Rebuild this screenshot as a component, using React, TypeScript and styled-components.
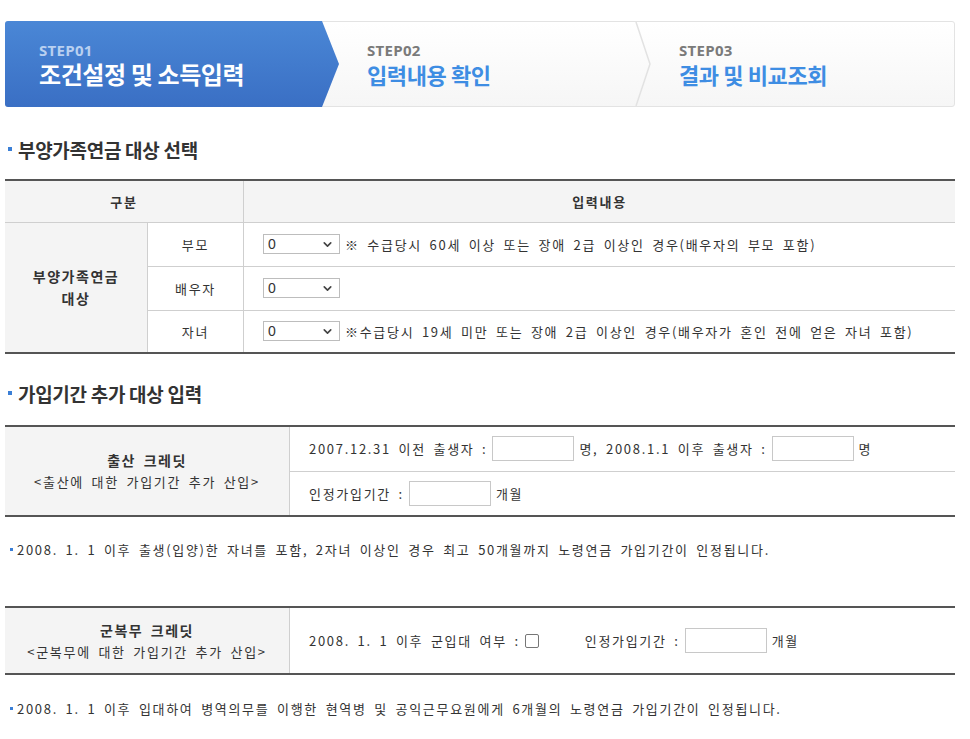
import React from 'react';
import styled, { createGlobalStyle } from 'styled-components';
import { ChevronDown } from 'lucide-react';

// === Global ===
const GlobalStyle = createGlobalStyle`
  body {
    margin: 0;
    background: #fff;
    color: #333;
    font-family: 'Noto Sans CJK KR', 'Noto Sans', sans-serif;
    font-size: 13px;
  }
`;

const Page = styled.div`
  width: 950px;
  padding: 21px 0 0 5px;
`;

// === Step bar ===
const StepBar = styled.div`
  display: flex;
  height: 86px;
  border: 1px solid #e3e3e3;
  border-radius: 3px;
  box-sizing: border-box;
  background: linear-gradient(to bottom, #ffffff, #f6f6f6);
`;

const Step = styled.div<{ $active?: boolean; $width?: number }>`
  position: relative;
  box-sizing: border-box;
  flex: ${p => (p.$width ? `0 0 ${p.$width}px` : '1')};
  display: flex;
  flex-direction: column;
  justify-content: center;
  gap: 2px;
  padding: 0 0 0 ${p => (p.$active ? 34 : 28)}px;
  margin: ${p => (p.$active ? '-1px 0 -1px -1px' : '0')};
  background: ${p => (p.$active ? 'linear-gradient(to bottom, #4a87d6, #3a6fc4)' : 'transparent')};
  clip-path: ${p =>
    p.$active
      ? 'polygon(0 0, calc(100% - 17px) 0, 100% 50%, calc(100% - 17px) 100%, 0 100%)'
      : 'none'};
  border-radius: ${p => (p.$active ? '3px 0 0 3px' : '0')};
`;

const StepLabel = styled.div<{ $active?: boolean }>`
  font-family: 'Open Sans', 'Liberation Sans', sans-serif;
  font-weight: 700;
  font-size: 15px;
  line-height: 18px;
  letter-spacing: 0.3px;
  color: ${p => (p.$active ? '#b9d0f0' : '#7a7a7a')};
`;

const StepTitle = styled.div<{ $active?: boolean }>`
  font-weight: 700;
  font-size: ${p => (p.$active ? 24 : 22)}px;
  line-height: 26px;
  letter-spacing: -0.4px;
  color: ${p => (p.$active ? '#ffffff' : '#3e8de3')};
`;

const StepDivider = styled.svg`
  position: absolute;
  right: 0;
  top: 0;
  width: 16px;
  height: 100%;
`;

// === Headings and notes ===
const SectionTitle = styled.h2<{ $top: number }>`
  display: flex;
  align-items: center;
  gap: 6px;
  margin: ${p => p.$top}px 0 0 3px;
  height: 24px;
  font-size: 19px;
  font-weight: 700;
  color: #333;
  letter-spacing: -0.3px;

  &::before {
    content: '';
    width: 4px;
    height: 4px;
    background: #3b7fd6;
  }
`;

const Note = styled.p<{ $top: number }>`
  display: flex;
  align-items: center;
  gap: 4px;
  margin: ${p => p.$top}px 0 0 5px;
  height: 20px;
  font-size: 13px;
  color: #333;
  letter-spacing: 1.7px;
  word-spacing: 3px;

  &::before {
    content: '';
    width: 3px;
    height: 3px;
    background: #3b7fd6;
  }
`;

// === Tables ===
const Table = styled.table<{ $top: number }>`
  width: 100%;
  margin-top: ${p => p.$top}px;
  border-collapse: collapse;
  border-top: 2px solid #555;
  border-bottom: 2px solid #555;
  font-size: 13px;
  color: #333;
  letter-spacing: 1.7px;
  word-spacing: 3px;
`;

const Row = styled.tr<{ $h: number }>`
  height: ${p => p.$h}px;
`;

const HeadCell = styled.th<{ $width?: number }>`
  width: ${p => (p.$width ? `${p.$width}px` : 'auto')};
  background: #f4f4f4;
  font-weight: 700;
  text-align: center;
  border: 1px solid #cfcfcf;
  border-left: none;
  padding: 0;

  &:last-child {
    border-right: none;
  }
`;

const LabelCell = styled.td<{ $width?: number }>`
  width: ${p => (p.$width ? `${p.$width}px` : 'auto')};
  text-align: center;
  border: 1px solid #cfcfcf;
  padding: 0;
`;

const SideCell = styled.td<{ $width: number }>`
  width: ${p => p.$width}px;
  background: #f4f4f4;
  text-align: center;
  border: 1px solid #cfcfcf;
  border-left: none;
  padding: 0;
  line-height: 22px;
`;

const Strong = styled.strong`
  display: block;
  font-size: 14px;
  font-weight: 700;
  letter-spacing: 1.5px;
`;

const InputCell = styled.td<{ $pad?: number }>`
  border: 1px solid #cfcfcf;
  border-right: none;
  padding: 0 0 0 ${p => p.$pad ?? 19}px;
  white-space: nowrap;
`;

const Inline = styled.div`
  display: flex;
  align-items: center;
  gap: 5px;
`;

const SelectWrap = styled.div`
  position: relative;
  display: inline-flex;
  width: 77px;
  height: 20px;

  svg {
    position: absolute;
    right: 6px;
    top: 4px;
    pointer-events: none;
  }
`;

const Select = styled.select`
  appearance: none;
  width: 100%;
  height: 100%;
  border: 1px solid #bdbdbd;
  background: #fff;
  padding: 0 4px;
  font-family: 'Liberation Sans', sans-serif;
  font-size: 14px;
  color: #333;
`;

const TextBox = styled.input`
  box-sizing: border-box;
  width: 82px;
  height: 25px;
  border: 1px solid #c8c8c8;
  background: #fff;
`;

const Check = styled.input`
  box-sizing: border-box;
  appearance: none;
  width: 14px;
  height: 14px;
  margin: 0;
  border: 1px solid #767676;
  border-radius: 2px;
  background: #fff;
`;

const Spacer = styled.span<{ $w: number }>`
  display: inline-block;
  width: ${p => p.$w}px;
`;

const Sel: React.FC = () => (
  <SelectWrap>
    <Select defaultValue="0">
      <option value="0">0</option>
      <option value="1">1</option>
      <option value="2">2</option>
    </Select>
    <ChevronDown size={13} strokeWidth={3} color="#444" />
  </SelectWrap>
);

export default function App() {
  return (
    <Page>
      <GlobalStyle />

      <StepBar>
        <Step $active $width={334}>
          <StepLabel $active>STEP01</StepLabel>
          <StepTitle $active>조건설정 및 소득입력</StepTitle>
        </Step>
        <Step $width={312}>
          <StepLabel>STEP02</StepLabel>
          <StepTitle>입력내용 확인</StepTitle>
          <StepDivider viewBox="0 0 16 86" preserveAspectRatio="none">
            <polyline points="1,0 15,43 1,86" fill="none" stroke="#e2e2e2" strokeWidth="1.5" />
          </StepDivider>
        </Step>
        <Step>
          <StepLabel>STEP03</StepLabel>
          <StepTitle>결과 및 비교조회</StepTitle>
        </Step>
      </StepBar>

      <SectionTitle $top={30}>부양가족연금 대상 선택</SectionTitle>
      <Table $top={18}>
        <tbody>
          <Row $h={42}>
            <HeadCell colSpan={2}>구분</HeadCell>
            <HeadCell>입력내용</HeadCell>
          </Row>
          <Row $h={44}>
            <SideCell $width={142} rowSpan={3}>
              <Strong as="span">부양가족연금<br />대상</Strong>
            </SideCell>
            <LabelCell $width={95}>부모</LabelCell>
            <InputCell>
              <Inline>
                <Sel />
                <span>※ 수급당시 60세 이상 또는 장애 2급 이상인 경우(배우자의 부모 포함)</span>
              </Inline>
            </InputCell>
          </Row>
          <Row $h={44}>
            <LabelCell $width={95}>배우자</LabelCell>
            <InputCell>
              <Inline>
                <Sel />
              </Inline>
            </InputCell>
          </Row>
          <Row $h={43}>
            <LabelCell $width={95}>자녀</LabelCell>
            <InputCell>
              <Inline>
                <Sel />
                <span>※수급당시 19세 미만 또는 장애 2급 이상인 경우(배우자가 혼인 전에 얻은 자녀 포함)</span>
              </Inline>
            </InputCell>
          </Row>
        </tbody>
      </Table>

      <SectionTitle $top={27}>가입기간 추가 대상 입력</SectionTitle>
      <Table $top={20}>
        <tbody>
          <Row $h={45}>
            <SideCell $width={284} rowSpan={2}>
              <Strong>출산 크레딧</Strong>
              &lt;출산에 대한 가입기간 추가 산입&gt;
            </SideCell>
            <InputCell>
              <Inline>
                <span>2007.12.31 이전 출생자 :</span>
                <TextBox />
                <span>명, 2008.1.1 이후 출생자 :</span>
                <TextBox />
                <span>명</span>
              </Inline>
            </InputCell>
          </Row>
          <Row $h={45}>
            <InputCell>
              <Inline>
                <span>인정가입기간 :</span>
                <TextBox />
                <span>개월</span>
              </Inline>
            </InputCell>
          </Row>
        </tbody>
      </Table>

      <Note $top={22}>2008. 1. 1 이후 출생(입양)한 자녀를 포함, 2자녀 이상인 경우 최고 50개월까지 노령연금 가입기간이 인정됩니다.</Note>

      <Table $top={47}>
        <tbody>
          <Row $h={67}>
            <SideCell $width={284}>
              <Strong>군복무 크레딧</Strong>
              &lt;군복무에 대한 가입기간 추가 산입&gt;
            </SideCell>
            <InputCell>
              <Inline>
                <span>2008. 1. 1 이후 군입대 여부 :</span>
                <Check type="checkbox" />
                <Spacer $w={36} />
                <span>인정가입기간 :</span>
                <TextBox />
                <span>개월</span>
              </Inline>
            </InputCell>
          </Row>
        </tbody>
      </Table>

      <Note $top={23}>2008. 1. 1 이후 입대하여 병역의무를 이행한 현역병 및 공익근무요원에게 6개월의 노령연금 가입기간이 인정됩니다.</Note>
    </Page>
  );
}
